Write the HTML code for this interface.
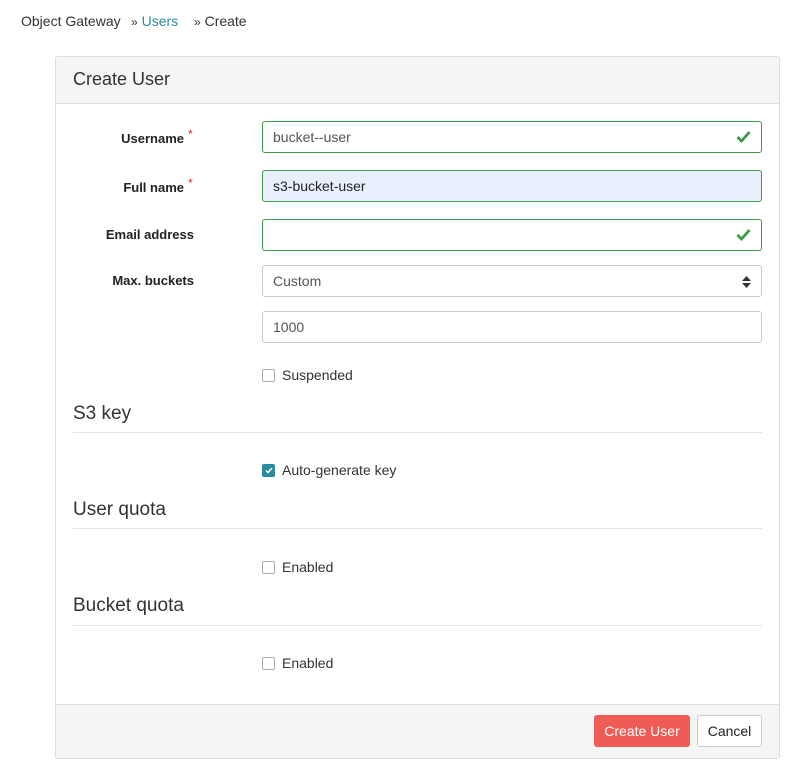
<!DOCTYPE html>
<html><head><style>
body{margin:0;width:793px;height:771px;background:#fff;font-family:"Liberation Sans",Arial,sans-serif;color:#333;position:relative;overflow:hidden}
.a{position:absolute}
.bc{top:13px;font-size:14px}
.panel{left:55px;top:56px;width:723px;height:701px;border:1px solid #ddd;border-radius:3px}
.hdr{left:56px;top:57px;width:723px;height:46px;background:#f5f5f5;border-bottom:1px solid #ddd}
.ftr{left:56px;top:704px;width:723px;height:53px;background:#f5f5f5;border-top:1px solid #ddd}
.lbl{right:609px;font-size:13px;font-weight:bold;color:#222;text-align:right}
.star{color:#c9302c;font-weight:normal;position:absolute;left:100%;top:-4px;margin-left:4px;font-size:12px}
.inp{left:262px;height:30px;border:1px solid #ccc;border-radius:3px;font-size:14px;line-height:30px;box-sizing:content-box;padding-left:10px;width:488px;color:#555}
.ok{border-color:#3a9a48}
.chk{position:absolute;right:10px;top:8px}
.cb{left:262px;width:11px;height:11px;border:1px solid #aaa;border-radius:2px;background:#fff}
.cbl{left:282px;font-size:14px}
.h{left:73px;font-size:19px;color:#333}
.ln{left:73px;width:689px;height:1px;background:#e5e5e5}
</style></head><body>
<div class="a bc" style="left:21px">Object Gateway</div>
<div class="a bc" style="left:131px"><span style="font-size:12px">»</span> <span style="color:#2b8a9e">Users</span></div>
<div class="a bc" style="left:194px"><span style="font-size:12px">»</span> Create</div>
<div class="a panel"></div>
<div class="a hdr"></div>
<div class="a" style="left:73px;top:69px;font-size:18px">Create User</div>

<div class="a lbl" style="top:131px">Username<span class="star">*</span></div>
<div class="a inp ok" style="top:121px">bucket--user<svg class="chk" width="15" height="13" viewBox="0 0 15 13"><path d="M1.5 7l4 4L13.5 2" stroke="#3a9a48" stroke-width="2.8" fill="none"/></svg></div>
<div class="a lbl" style="top:180px">Full name<span class="star">*</span></div>
<div class="a inp ok" style="top:170px;background:#e8f0fe;color:#222">s3-bucket-user</div>
<div class="a lbl" style="top:227px;right:599px">Email address</div>
<div class="a inp ok" style="top:219px"><svg class="chk" width="15" height="13" viewBox="0 0 15 13"><path d="M1.5 7l4 4L13.5 2" stroke="#3a9a48" stroke-width="2.8" fill="none"/></svg></div>
<div class="a lbl" style="top:273px;right:599px">Max. buckets</div>
<div class="a inp" style="top:265px">Custom<svg style="position:absolute;right:10px;top:10px" width="9" height="12" viewBox="0 0 9 12"><path d="M0 5L4.5 0 9 5zM0 7l4.5 5L9 7z" fill="#333"/></svg></div>
<div class="a inp" style="top:311px">1000</div>

<div class="a cb" style="top:369px"></div><div class="a cbl" style="top:367px">Suspended</div>
<div class="a h" style="top:403px">S3 key</div><div class="a ln" style="top:432px"></div>
<div class="a cb" style="top:464px;background:#2b8a9e;border-color:#2b8a9e"><svg style="position:absolute;left:2px;top:2px" width="8" height="7" viewBox="0 0 8 7"><path d="M1 3.5l2 2L7 1" stroke="#fff" stroke-width="1.5" fill="none"/></svg></div><div class="a cbl" style="top:462px">Auto-generate key</div>
<div class="a h" style="top:499px">User quota</div><div class="a ln" style="top:528px"></div>
<div class="a cb" style="top:561px"></div><div class="a cbl" style="top:559px">Enabled</div>
<div class="a h" style="top:595px">Bucket quota</div><div class="a ln" style="top:625px"></div>
<div class="a cb" style="top:657px"></div><div class="a cbl" style="top:655px">Enabled</div>

<div class="a ftr"></div>
<div class="a" style="left:594px;top:715px;width:96px;height:32px;background:#ef5c55;border-radius:3px;color:#fff;font-size:14px;line-height:32px;text-align:center">Create User</div>
<div class="a" style="left:697px;top:715px;width:63px;height:30px;background:#fff;border:1px solid #ccc;border-radius:3px;font-size:14px;line-height:30px;text-align:center;color:#222">Cancel</div>
</body></html>
